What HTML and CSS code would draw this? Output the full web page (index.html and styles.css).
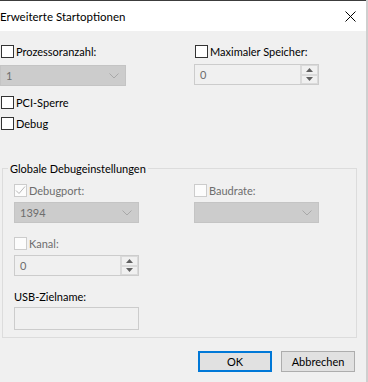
FILE: index.html
```html
<!DOCTYPE html>
<html>
<head>
  <title>Erweiterte Startoptionen</title>
  <meta charset="UTF-8">
  <link rel="stylesheet" href="styles.css">
</head>
<body>
  <div class="window">
    <div class="titlebar">
      <span class="title">Erweiterte Startoptionen</span>
      <svg class="close" width="11" height="11" viewBox="0 0 11 11">
        <path d="M0.5 0.5 L10.5 10.5 M10.5 0.5 L0.5 10.5" stroke="#000" stroke-width="1" fill="none"/>
      </svg>
    </div>

    <div class="content">
      <div class="top-grid">
        <div class="field">
          <label class="check"><span class="box"></span>Prozessoranzahl:</label>
          <div class="combo">
            <span>1</span>
            <svg class="chevron" width="10" height="6" viewBox="0 0 10 6"><path d="M0.5 0.5 L5 5 L9.5 0.5" stroke="#a8a8a8" fill="none"/></svg>
          </div>
        </div>
        <div class="field">
          <label class="check"><span class="box"></span>Maximaler Speicher:</label>
          <div class="spin">
            <span class="spin-value">0</span>
            <div class="spin-buttons">
              <span class="spin-btn"><svg width="7" height="4" viewBox="0 0 7 4"><path d="M3.5 0 L7 4 L0 4 Z" fill="#606060"/></svg></span>
              <span class="spin-btn"><svg width="7" height="4" viewBox="0 0 7 4"><path d="M0 0 L7 0 L3.5 4 Z" fill="#606060"/></svg></span>
            </div>
          </div>
        </div>
      </div>

      <label class="check row-pci"><span class="box"></span>PCI-Sperre</label>
      <label class="check row-debug"><span class="box"></span>Debug</label>

      <fieldset class="group">
        <legend>Globale Debugeinstellungen</legend>

        <div class="group-grid">
          <div class="field">
            <label class="check disabled"><span class="box">
              <svg width="11" height="11" viewBox="0 0 11 11"><path d="M1 5.5 L4 8.5 L10 1.5" stroke="#b8b8b8" stroke-width="1" fill="none"/></svg>
            </span>Debugport:</label>
            <div class="combo">
              <span>1394</span>
              <svg class="chevron" width="10" height="6" viewBox="0 0 10 6"><path d="M0.5 0.5 L5 5 L9.5 0.5" stroke="#a8a8a8" fill="none"/></svg>
            </div>
          </div>
          <div class="field">
            <label class="check disabled"><span class="box"></span>Baudrate:</label>
            <div class="combo">
              <span></span>
              <svg class="chevron" width="10" height="6" viewBox="0 0 10 6"><path d="M0.5 0.5 L5 5 L9.5 0.5" stroke="#a8a8a8" fill="none"/></svg>
            </div>
          </div>
        </div>

        <div class="field field-kanal">
          <label class="check disabled"><span class="box"></span>Kanal:</label>
          <div class="spin">
            <span class="spin-value">0</span>
            <div class="spin-buttons">
              <span class="spin-btn"><svg width="7" height="4" viewBox="0 0 7 4"><path d="M3.5 0 L7 4 L0 4 Z" fill="#606060"/></svg></span>
              <span class="spin-btn"><svg width="7" height="4" viewBox="0 0 7 4"><path d="M0 0 L7 0 L3.5 4 Z" fill="#606060"/></svg></span>
            </div>
          </div>
        </div>

        <div class="field field-usb">
          <label class="plain-label">USB-Zielname:</label>
          <div class="textbox"></div>
        </div>
      </fieldset>

      <div class="buttons">
        <button class="btn btn-default">OK</button>
        <button class="btn">Abbrechen</button>
      </div>
    </div>
  </div>
</body>
</html>
```

FILE: styles.css
```css
html, body {
  margin: 0;
  padding: 0;
}

body {
  font-family: Lato, "Liberation Sans", sans-serif;
  font-size: 11px;
  color: #000;
  background: #f0f0f0;
}

.window {
  width: 366px;
  height: 382px;
  border-right: 2px solid #cfcfcf;
  background: #f0f0f0;
}

.titlebar {
  height: 30px;
  border-top: 1px solid #3c3c3c;
  background: #fff;
  display: flex;
  align-items: center;
  justify-content: space-between;
}

.title {
  font-size: 11.5px;
  margin-top: 1px;
}

.close {
  margin-right: 10px;
}

.content {
  padding-top: 14px;
}

.top-grid {
  display: grid;
  grid-template-columns: 126px 125px;
  column-gap: 68px;
}

.field {
  display: flex;
  flex-direction: column;
}

.check {
  display: flex;
  align-items: center;
  height: 13px;
  line-height: 13px;
  margin-left: 1px;
  white-space: nowrap;
}

.box {
  width: 11px;
  height: 11px;
  border: 1px solid #333;
  background: #fff;
  margin-right: 2px;
  flex: none;
  display: flex;
  align-items: center;
  justify-content: center;
}

.check.disabled {
  color: #6d6d6d;
}

.check.disabled .box {
  border-color: #cccccc;
  background: #fcfcfc;
}

.combo {
  height: 21px;
  margin-top: 7px;
  background: #cccccc;
  border: 1px solid #c4c4c4;
  box-sizing: border-box;
  display: flex;
  align-items: center;
  justify-content: space-between;
  padding: 0 6px 0 5px;
  color: #6d6d6d;
}

.spin {
  height: 21px;
  margin-top: 6px;
  border: 1px solid #cccccc;
  box-sizing: border-box;
  background: #f0f0f0;
  display: flex;
  justify-content: space-between;
  color: #6d6d6d;
}

.spin-value {
  padding-left: 5px;
  line-height: 19px;
}

.spin-buttons {
  display: flex;
  flex-direction: column;
  width: 17px;
  border-left: 1px solid #dadada;
}

.spin-btn {
  flex: 1;
  display: flex;
  align-items: center;
  justify-content: center;
  border: 1px solid #dadada;
  background: #f0f0f0;
}

.row-pci {
  margin-top: 10px;
}

.row-debug {
  margin-top: 8px;
}

.group {
  margin: 31px 9px 0 2px;
  padding: 8px 12px 7px 11px;
  border: 1px solid #dcdcdc;
  min-width: 0;
}

.group legend {
  padding: 0 2px;
  margin-left: -6px;
  line-height: 15px;
}

.group-grid {
  display: grid;
  grid-template-columns: 125px 125px;
  column-gap: 55px;
}

.group .check {
  margin-left: 0;
}

.group .combo {
  margin-top: 5px;
}

.field-kanal {
  width: 125px;
  margin-top: 14px;
}

.field-kanal .spin {
  margin-top: 5px;
}

.field-usb {
  width: 125px;
  margin-top: 13px;
}

.plain-label {
  line-height: 15px;
}

.textbox {
  height: 23px;
  margin-top: 3px;
  border: 1px solid #cccccc;
  box-sizing: border-box;
  background: #f0f0f0;
}

.buttons {
  display: flex;
  justify-content: flex-end;
  gap: 9px;
  margin-top: 13px;
  padding-right: 11px;
}

.btn {
  width: 74px;
  height: 21px;
  font-family: Lato, "Liberation Sans", sans-serif;
  font-size: 11px;
  color: #000;
  background: #e1e1e1;
  border: 1px solid #adadad;
  padding: 0;
}

.btn-default {
  border: 2px solid #0078d7;
}
```
